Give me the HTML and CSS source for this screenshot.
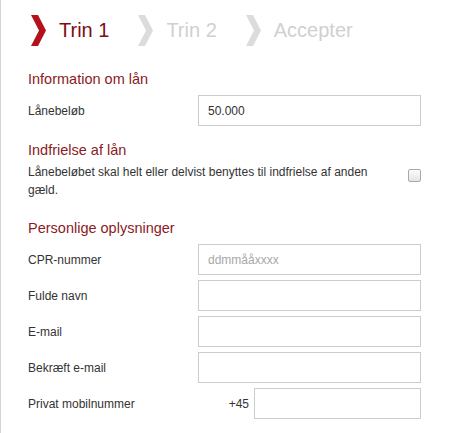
FILE: index.html
```html
<!DOCTYPE html>
<html lang="da">
<head>
<meta charset="utf-8">
<title>Lån</title>
<link rel="stylesheet" href="styles.css">
</head>
<body>
<div class="page">
  <div class="steps">
    <div class="step active">
      <svg class="chev" width="16" height="31" viewBox="0 0 16 31"><polygon points="1,0 8,0 16,15.5 8,31 1,31 9,15.5"/></svg>
      <span>Trin 1</span>
    </div>
    <div class="step">
      <svg class="chev" width="16" height="31" viewBox="0 0 16 31"><polygon points="1,0 8,0 16,15.5 8,31 1,31 9,15.5"/></svg>
      <span>Trin 2</span>
    </div>
    <div class="step">
      <svg class="chev" width="16" height="31" viewBox="0 0 16 31"><polygon points="1,0 8,0 16,15.5 8,31 1,31 9,15.5"/></svg>
      <span>Accepter</span>
    </div>
  </div>

  <h2 class="heading h-first">Information om lån</h2>
  <div class="form">
    <label class="label">Lånebeløb</label>
    <input class="field" type="text" value="50.000">
  </div>

  <h2 class="heading h-second">Indfrielse af lån</h2>
  <div class="check-row">
    <p class="check-text">Lånebeløbet skal helt eller delvist benyttes til indfrielse af anden gæld.</p>
    <input class="check" type="checkbox">
  </div>

  <h2 class="heading h-third">Personlige oplysninger</h2>
  <div class="form">
    <label class="label">CPR-nummer</label>
    <input class="field" type="text" placeholder="ddmmååxxxx">
    <label class="label">Fulde navn</label>
    <input class="field" type="text">
    <label class="label">E-mail</label>
    <input class="field" type="text">
    <label class="label">Bekræft e-mail</label>
    <input class="field" type="text">
    <label class="label">Privat mobilnummer</label>
    <div class="phone">
      <span class="prefix">+45</span>
      <input class="field phone-field" type="text">
    </div>
  </div>
</div>
</body>
</html>
```

FILE: styles.css
```css
html, body {
  margin: 0;
  padding: 0;
  background: #fff;
}
body {
  font-family: "Liberation Sans", Arial, sans-serif;
  color: #333;
}
.page {
  border-left: 1px solid #d4d4d4;
  min-height: 433px;
  box-sizing: border-box;
  padding-left: 27px;
  padding-top: 15px;
  width: 458px;
}
.steps {
  display: flex;
  align-items: center;
  gap: 28px;
  padding-left: 2px;
  height: 31px;
}
.step {
  display: flex;
  align-items: center;
  gap: 13px;
  font-size: 20px;
  color: #d0d0d0;
}
.step .chev {
  fill: #dcdcdc;
  display: block;
}
.step.active {
  color: #7e0c14;
}
.step.active .chev {
  fill: #b3121c;
}
.heading {
  font-size: 14.5px;
  font-weight: normal;
  line-height: 18px;
  color: #8b1a24;
  margin: 0;
}
.h-first { margin-top: 24px; margin-bottom: 7px; }
.h-second { margin-top: 15px; margin-bottom: 5px; }
.h-third { margin-top: 20px; margin-bottom: 7px; }
.form {
  display: grid;
  grid-template-columns: 170px 223px;
  row-gap: 5px;
  align-items: center;
}
.label {
  font-size: 12px;
  color: #333;
}
.field {
  box-sizing: border-box;
  height: 31px;
  width: 223px;
  border: 1px solid #cccccc;
  border-radius: 0;
  padding: 0 9px;
  font-family: "Liberation Sans", Arial, sans-serif;
  font-size: 12px;
  color: #333;
  outline: none;
  margin: 0;
}
.field::placeholder {
  color: #a8a8a8;
}
.phone {
  display: flex;
  align-items: center;
  justify-content: flex-end;
  gap: 5px;
}
.prefix {
  font-size: 12px;
  color: #333;
}
.phone-field {
  width: 167px;
}
.check-row {
  display: flex;
  align-items: flex-start;
  justify-content: space-between;
  width: 393px;
}
.check-text {
  margin: 0;
  width: 360px;
  font-size: 12px;
  line-height: 17.5px;
  color: #333;
}
.check {
  appearance: none;
  -webkit-appearance: none;
  box-sizing: border-box;
  width: 13px;
  height: 13px;
  margin: 5px 0 0 0;
  border: 1px solid #a9a9a9;
  border-radius: 2px;
  background: linear-gradient(#fcfcfc, #e4e4e4);
}
```
